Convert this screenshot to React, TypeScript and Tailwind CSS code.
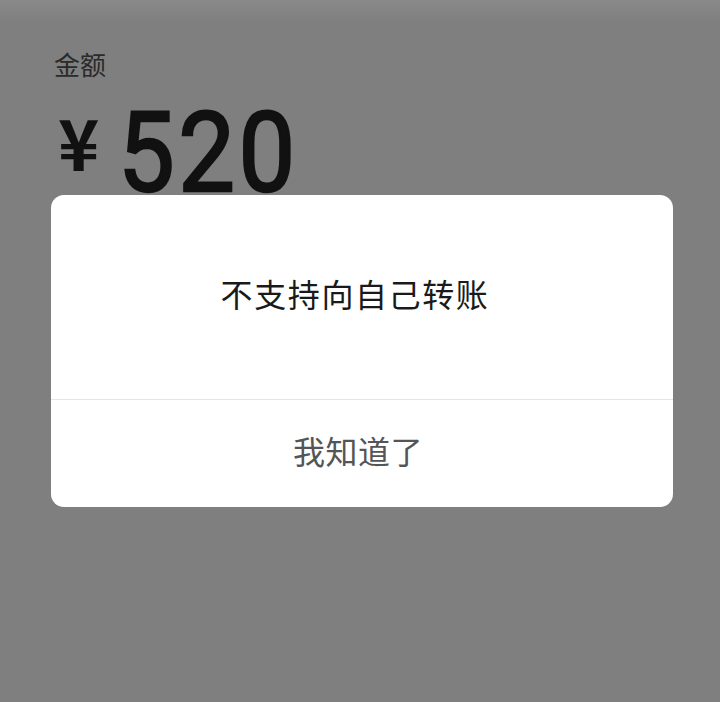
import React from "react";

export default function App() {
  return (
    <div
      className="w-[720px] h-[702px] bg-[#7f7f7f] overflow-hidden"
      style={{ fontFamily: '"Noto Sans CJK SC", "Noto Sans", sans-serif' }}
    >
      <div className="h-[22px] bg-gradient-to-b from-[#8a8a8a] to-[#7f7f7f]" />
      <div className="pl-[54px] pt-[25px] text-[26px] leading-[34px] text-[#2a2a2a]">金额</div>
      <div className="flex items-start pl-[58px] h-[104px] mt-[10px]">
        <span
          className="text-[70px] leading-[70px] font-bold text-[#111] mr-[19px] mt-[15px]"
          style={{ fontFamily: '"Noto Sans CJK SC", sans-serif' }}
        >
          ¥
        </span>
        <span
          className="inline-block text-[112px] leading-[104px] font-normal text-[#111] tracking-[4px] mt-[10px] scale-x-[0.9] origin-left"
          style={{ fontFamily: 'Roboto, "Noto Sans", sans-serif', WebkitTextStroke: "2.5px #111" }}
        >
          520
        </span>
      </div>
      <div className="ml-[51px] w-[622px] bg-white rounded-[13px] flex flex-col">
        <div className="h-[204px] flex items-center justify-center pr-[14px] pb-[8px] text-[32px] text-[#1a1a1a] tracking-[1.6px]">
          不支持向自己转账
        </div>
        <div className="h-[1px] bg-[#e6e6e6]" />
        <div className="h-[107px] flex items-center justify-center pr-[8px] pb-[8px] text-[32px] text-[#555] tracking-[0.5px]">
          我知道了
        </div>
      </div>
    </div>
  );
}
